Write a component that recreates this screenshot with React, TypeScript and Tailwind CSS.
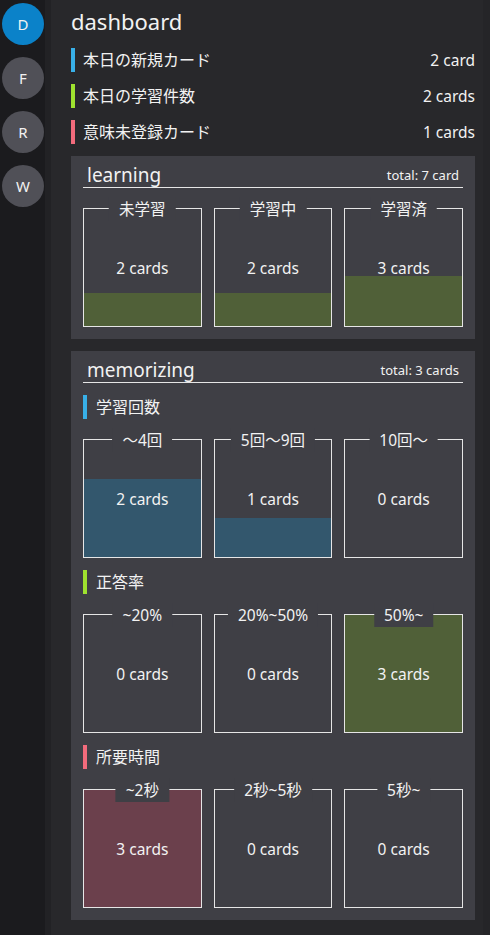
import React from 'react';

type Bucket = { label: string; count: number };

const Box: React.FC<{ bucket: Bucket; total: number; fill: string }> = ({ bucket, total, fill }) => {
  const pct = total > 0 ? (bucket.count / total) * 100 : 0;
  return (
    <div className="relative h-[119px] border border-[#e6e6e6] flex items-center justify-center">
      <div className={`absolute inset-x-0 bottom-0 ${fill}`} style={{ height: `${pct}%` }} />
      <span className="relative text-[15.5px] leading-5">{bucket.count} cards</span>
      <span className="absolute top-0 left-1/2 -translate-x-1/2 -translate-y-1/2 px-2.5 bg-[#3f3f45] text-[15.5px] leading-[24px] whitespace-nowrap">
        {bucket.label}
      </span>
    </div>
  );
};

const Grid: React.FC<{ buckets: Bucket[]; total: number; fill: string; className?: string }> = ({
  buckets,
  total,
  fill,
  className = '',
}) => (
  <div className={`grid grid-cols-3 gap-3 ${className}`}>
    {buckets.map((b) => (
      <Box key={b.label} bucket={b} total={total} fill={fill} />
    ))}
  </div>
);

const PanelHeader: React.FC<{ title: string; total: string }> = ({ title, total }) => (
  <div className="flex items-center justify-between h-[26px] border-b border-[#e6e6e6] px-1">
    <span className="text-[19px] leading-[26px]">{title}</span>
    <span className="text-[13px] leading-[26px]">{total}</span>
  </div>
);

const Label: React.FC<{ bar: string; text: string; className?: string }> = ({ bar, text, className = '' }) => (
  <div className={`flex items-center h-6 ${className}`}>
    <div className={`w-1 h-full ${bar}`} />
    <span className="ml-[9px] text-[16px] leading-6">{text}</span>
  </div>
);

export default function App() {
  const today = [
    { text: '本日の新規カード', value: '2 card', bar: 'bg-[#38b0e8]' },
    { text: '本日の学習件数', value: '2 cards', bar: 'bg-[#9fe22f]' },
    { text: '意味未登録カード', value: '1 cards', bar: 'bg-[#f26b7c]' },
  ];

  const learning: Bucket[] = [
    { label: '未学習', count: 2 },
    { label: '学習中', count: 2 },
    { label: '学習済', count: 3 },
  ];
  const counts: Bucket[] = [
    { label: '〜4回', count: 2 },
    { label: '5回〜9回', count: 1 },
    { label: '10回〜', count: 0 },
  ];
  const accuracy: Bucket[] = [
    { label: '~20%', count: 0 },
    { label: '20%~50%', count: 0 },
    { label: '50%~', count: 3 },
  ];
  const time: Bucket[] = [
    { label: '~2秒', count: 3 },
    { label: '2秒~5秒', count: 0 },
    { label: '5秒~', count: 0 },
  ];

  return (
    <div className="flex min-h-screen bg-[#28282b] text-[#f2f2f2] font-['Noto_Sans','Noto_Sans_CJK_JP',sans-serif]">
      <aside className="w-[45px] shrink-0 bg-[#1b1b1e] pt-[3px] pl-[2px] flex flex-col gap-3">
        {['D', 'F', 'R', 'W'].map((c, i) => (
          <div
            key={c}
            className={`w-[42px] h-[42px] rounded-full flex items-center justify-center text-[15px] ${
              i === 0 ? 'bg-[#0b82c9]' : 'bg-[#505057]'
            }`}
          >
            {c}
          </div>
        ))}
      </aside>
      <div className="w-[6px] shrink-0 bg-[#222225]" />

      <main className="flex-1 pl-5 pr-2 pt-[6px] pb-3">
        <h1 className="text-[22px] leading-[30px]">dashboard</h1>

        <div className="mt-3 flex flex-col gap-3">
          {today.map((r) => (
            <div key={r.text} className="flex items-center justify-between h-6">
              <div className="flex items-center h-full">
                <div className={`w-1 h-full ${r.bar}`} />
                <span className="ml-2 text-[16px] leading-6">{r.text}</span>
              </div>
              <span className="text-[15.5px] leading-6">{r.value}</span>
            </div>
          ))}
        </div>

        <section className="mt-3 bg-[#3f3f45] px-3 pt-[6px] pb-3">
          <PanelHeader title="learning" total="total: 7 card" />
          <Grid buckets={learning} total={7} fill="bg-[#506038]" className="mt-5" />
        </section>

        <section className="mt-3 bg-[#3f3f45] px-3 pt-[6px] pb-3">
          <PanelHeader title="memorizing" total="total: 3 cards" />
          <Label bar="bg-[#38b0e8]" text="学習回数" className="mt-3" />
          <Grid buckets={counts} total={3} fill="bg-[#33576d]" className="mt-5" />
          <Label bar="bg-[#9fe22f]" text="正答率" className="mt-3" />
          <Grid buckets={accuracy} total={3} fill="bg-[#506038]" className="mt-5" />
          <Label bar="bg-[#f26b7c]" text="所要時間" className="mt-3" />
          <Grid buckets={time} total={3} fill="bg-[#6b404c]" className="mt-5" />
        </section>
      </main>
      <div className="w-[7px] shrink-0 bg-[#252528]" />
    </div>
  );
}
